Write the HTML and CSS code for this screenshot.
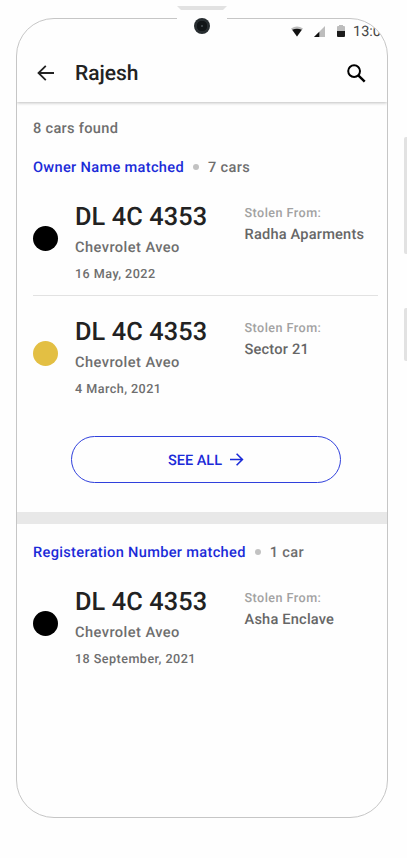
FILE: index.html
```html
<!DOCTYPE html>
<html lang="en">
<head>
<meta charset="utf-8">
<title>Rajesh</title>
<link rel="stylesheet" href="styles.css">
</head>
<body>
<div class="device">
  <div class="speaker"></div>
  <div class="camera"></div>
  <div class="side-key power"></div>
  <div class="side-key volume"></div>
  <main class="screen">
    <div class="status">
      <svg class="wifi" width="12" height="11" viewBox="0 0 12 11"><path d="M0 2.5Q6-1.7 12 2.5L6 10.5Z" fill="#bdbdbd"/><path d="M1.2 3.8Q6 1.5 10.8 3.8L6 10.5Z" fill="#111"/></svg>
      <svg class="signal" width="11" height="11" viewBox="0 0 11 11"><path d="M0 11L11 0V11Z" fill="#bdbdbd"/><path d="M0 11L5.3 5.7V11Z" fill="#111"/></svg>
      <svg class="battery" width="8" height="12" viewBox="0 0 8 12"><path d="M0 2Q0 1 1 1H2V0H6V1H7Q8 1 8 2V6H0Z" fill="#bdbdbd"/><path d="M0 6H8V11Q8 12 7 12H1Q0 12 0 11Z" fill="#1c1c1c"/></svg>
      <span class="time">13:00</span>
    </div>
    <header class="bar">
      <svg class="back" width="17" height="16" viewBox="0 0 17 16" fill="none" stroke="#222" stroke-width="1.8"><path d="M8.8.8L1.5 8L8.8 15.2M1.5 8H17"/></svg>
      <h1 class="title">Rajesh</h1>
      <svg class="search" width="19" height="19" viewBox="0 0 19 19" fill="none" stroke="#000" stroke-width="2"><circle cx="7.1" cy="7.1" r="5.9"/><path d="M11.3 11.3L17.7 17.7" stroke-width="2.4"/></svg>
    </header>
    <p class="found">8 cars found</p>
    <section>
      <h2 class="group"><span class="match">Owner Name matched</span><i class="bullet"></i><span class="count">7 cars</span></h2>
      <article class="car">
        <i class="paint"></i>
        <div><div class="plate">DL 4C 4353</div><div class="model">Chevrolet Aveo</div><div class="date">16 May, 2022</div></div>
        <div class="origin"><div class="label">Stolen From:</div><div class="place">Radha Aparments</div></div>
      </article>
      <article class="car second">
        <i class="paint gold"></i>
        <div><div class="plate">DL 4C 4353</div><div class="model">Chevrolet Aveo</div><div class="date">4 March, 2021</div></div>
        <div class="origin"><div class="label">Stolen From:</div><div class="place">Sector 21</div></div>
      </article>
      <a class="see-all">SEE ALL<svg width="14" height="13" viewBox="0 0 14 13" fill="none" stroke="#1b2bd8" stroke-width="1.6"><path d="M0 6.5H12.3M6.6.7L12.4 6.5L6.6 12.3"/></svg></a>
    </section>
    <section class="registration">
      <h2 class="group"><span class="match">Registeration Number matched</span><i class="bullet"></i><span class="count">1 car</span></h2>
      <article class="car last">
        <i class="paint"></i>
        <div><div class="plate">DL 4C 4353</div><div class="model">Chevrolet Aveo</div><div class="date">18 September, 2021</div></div>
        <div class="origin"><div class="label">Stolen From:</div><div class="place">Asha Enclave</div></div>
      </article>
    </section>
  </main>
</div>
</body>
</html>
```

FILE: styles.css
```css
* { box-sizing: border-box; margin: 0; }
body { background: #fefefe; font-family: Roboto, "Liberation Sans", sans-serif; font-weight: 500; overflow: hidden; text-rendering: geometricPrecision; }
.device { position: relative; width: 407px; height: 858px; padding: 18px 0 0 16px; }
.screen { width: 372px; height: 800px; border: 1px solid #c6c6c6; border-radius: 38px; overflow: hidden; background: #fefefe; }

/* Hardware details lying over the frame */
.speaker { position: absolute; left: 177px; top: 6px; width: 50px; height: 14px; background: #fefefe; }
.speaker::before { content: ""; display: block; width: 50px; height: 4px; background: #e2e2e2; clip-path: polygon(0 0, 100% 0, 46px 100%, 4px 100%); }
.camera { position: absolute; left: 194px; top: 18px; width: 16px; height: 16px; border-radius: 50%; background: radial-gradient(circle, #3b4246 0 1px, #111517 1.5px 5px, #272d30 5.5px); }
.side-key { position: absolute; left: 404px; width: 6px; background: #e2e2e2; border-radius: 2px; }
.power { top: 137px; height: 117px; }
.volume { top: 308px; height: 53px; }

.status { display: flex; align-items: center; height: 25px; padding-left: 274px; white-space: nowrap; color: #444; }
.wifi, .signal, .battery { position: relative; top: -.5px; flex: none; }
.signal { margin-left: 11px; }
.battery { margin-left: 12px; }
.time { margin-left: 8px; font-size: 14.5px; line-height: 23px; padding-bottom: 1px; font-weight: 400; letter-spacing: 0; }
.bar { display: flex; align-items: center; height: 58px; padding: 0 21px 0 20px; box-shadow: 0 1px 3px rgba(0, 0, 0, .25); clip-path: inset(0 0 -5px 0); }
.title { flex: 1; margin-left: 21px; padding-top: 2px; font-size: 21px; font-weight: 500; color: #222; }
.found { height: 51px; padding: 1px 0 0 16px; line-height: 50px; font-size: 14.6px; letter-spacing: .3px; color: #6e6e6e; }
.group { display: flex; align-items: center; height: 27px; padding: 1px 0 0 16px; font-size: 14.6px; font-weight: 500; letter-spacing: .32px; white-space: nowrap; }
.match { color: #1b2bd8; }
.bullet { width: 6px; height: 6px; margin: 0 9px; border-radius: 50%; background: #c2c2c2; }
.count { color: #6e6e6e; }

.car { display: grid; grid-template-columns: 42px 169.5px 1fr; height: 116px; margin: 0 9px 0 16px; padding-top: 22px; border-bottom: 1px solid #e2e2e2; white-space: nowrap; }
.second { height: 140px; padding-top: 21px; border: 0; }
.last { border: 0; }
.paint { width: 25px; height: 25px; margin-top: 23.5px; border-radius: 50%; background: #000; }
.gold { background: #e3bf43; }
.plate { line-height: 32px; font-size: 25.3px; letter-spacing: .1px; color: #222; }
.model { line-height: 26px; font-size: 14.6px; letter-spacing: .45px; color: #6e6e6e; }
.date { line-height: 30px; font-size: 12.6px; letter-spacing: .45px; color: #6e6e6e; }
.origin { padding-top: 2px; }
.label { line-height: 20px; font-size: 12.6px; letter-spacing: .45px; color: #a2a2a2; }
.place { line-height: 21px; font-size: 14.6px; letter-spacing: .2px; color: #666; }
.see-all { display: flex; align-items: center; justify-content: center; gap: 8px; width: 270px; height: 47px; margin-left: 53.5px; padding-top: 1px; border: 1.4px solid #3040dc; border-radius: 24px; font-size: 14.5px; color: #1b2bd8; }
.see-all svg { margin: -2px -1px 0 0; }
.registration { margin-top: 29px; padding-top: 14px; border-top: 12px solid #e8e8e8; }
```
